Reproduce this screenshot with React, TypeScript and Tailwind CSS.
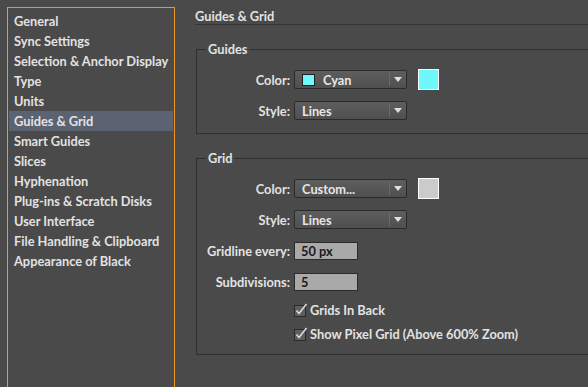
import React from 'react';

const menu = [
  'General',
  'Sync Settings',
  'Selection & Anchor Display',
  'Type',
  'Units',
  'Guides & Grid',
  'Smart Guides',
  'Slices',
  'Hyphenation',
  'Plug-ins & Scratch Disks',
  'User Interface',
  'File Handling & Clipboard',
  'Appearance of Black',
];

function Select({ label, swatch }: { label: string; swatch?: string }) {
  return (
    <div className="w-[113px] h-[19px] flex items-center border border-[#2b2b2b] bg-gradient-to-b from-[#5e5e5e] to-[#4f4f4f] rounded-[2px]">
      <div className="flex-1 flex items-center gap-[8px] pl-[7px]">
        {swatch && <div className="shrink-0 w-[13px] h-[12px] border border-[#222]" style={{ background: swatch }} />}
        <span className="text-[#e6e6e6]">{label}</span>
      </div>
      <div className="w-px h-[13px] bg-[#3a3a3a] border-r border-[#6a6a6a]" />
      <div className="w-[16px] flex justify-center">
        <svg width="8" height="5" viewBox="0 0 8 5">
          <path d="M0 0h8L4 5z" fill="#e0e0e0" />
        </svg>
      </div>
    </div>
  );
}

function Swatch({ color }: { color: string }) {
  return <div className="ml-[11px] w-[21px] h-[21px] border border-white" style={{ background: color }} />;
}

function Row({ label, children }: { label: string; children: React.ReactNode }) {
  return (
    <div className="h-[31px] flex items-center">
      <div className="w-[97px] pr-[4px] text-right">{label}</div>
      {children}
    </div>
  );
}

function Input({ value }: { value: string }) {
  return (
    <div className="w-[64px] h-[18px] bg-[#a9a9a9] border border-[#2b2b2b] pl-[6px] flex items-center text-[#1a1a1a]">
      {value}
    </div>
  );
}

function Check({ label }: { label: string }) {
  return (
    <div className="flex items-center gap-[2px] pl-[97px]">
      <svg width="14" height="14" viewBox="0 0 14 14">
        <rect x="0.5" y="2.5" width="11" height="11" fill="#5e5e5e" stroke="#2a2a2a" />
        <path d="M2.5 7.5l2.5 3L12.5 1" stroke="#dcdcdc" strokeWidth="1.5" fill="none" />
      </svg>
      <span>{label}</span>
    </div>
  );
}

export default function App() {
  return (
    <div className="w-[588px] h-[387px] overflow-hidden bg-[#4a4a4a] flex text-[12.8px] font-bold text-[#e2e2e2] font-['Lato',sans-serif] leading-[20px]">
      {/* Sidebar */}
      <div className="ml-[7px] mt-[7px] w-[168px] h-[400px] border border-b-0 border-[#f0961e] pt-[3px] px-px">
        {menu.map((item) => (
          <div
            key={item}
            className={`h-[20px] pl-[5px] ${item === 'Guides & Grid' ? 'bg-[#5b6372]' : ''}`}
          >
            {item}
          </div>
        ))}
      </div>

      {/* Main */}
      <div className="flex-1 pl-[20px]">
        <div className="pt-[6px] h-[25px] border-b border-[#353535]">Guides & Grid</div>

        <fieldset className="mt-[16px] ml-px border border-r-0 border-[#2f2f2f] pl-[9px] h-[93px] min-w-0">
          <legend className="px-[2px] leading-[16px]">Guides</legend>
          <div className="pt-[7px] -ml-[9px]">
            <Row label="Color:">
              <Select label="Cyan" swatch="#6ef8fa" />
              <Swatch color="#6ef8fa" />
            </Row>
            <Row label="Style:">
              <Select label="Lines" />
            </Row>
          </div>
        </fieldset>

        <fieldset className="mt-[16px] ml-px border border-r-0 border-[#2f2f2f] pl-[9px] h-[205px] min-w-0">
          <legend className="px-[2px] leading-[16px]">Grid</legend>
          <div className="pt-[7px] -ml-[9px]">
            <Row label="Color:">
              <Select label="Custom..." />
              <Swatch color="#cbcbcb" />
            </Row>
            <Row label="Style:">
              <Select label="Lines" />
            </Row>
            <Row label="Gridline every:">
              <Input value="50 px" />
            </Row>
            <Row label="Subdivisions:">
              <Input value="5" />
            </Row>
            <div className="flex flex-col gap-[4px] pt-[3px]">
              <Check label="Grids In Back" />
              <Check label="Show Pixel Grid (Above 600% Zoom)" />
            </div>
          </div>
        </fieldset>
      </div>
    </div>
  );
}
